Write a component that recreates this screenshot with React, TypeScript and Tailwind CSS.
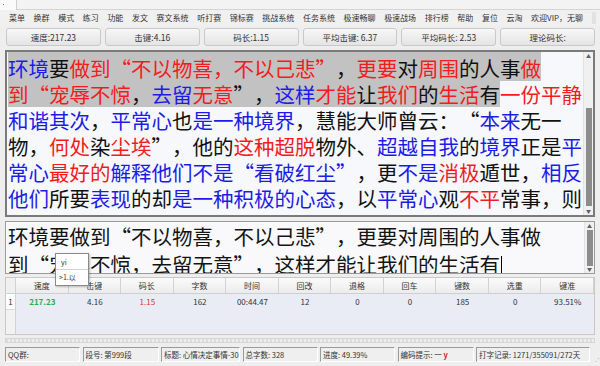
import React from "react";

type Seg = [string, "b" | "r" | "k"];

const color: Record<string, string> = {
  b: "text-[#1c1ce8]",
  r: "text-[#f21c1c]",
  k: "text-[#111111]",
};

const menu = [
  "菜单", "换群", "模式", "练习", "功能", "发文", "赛文系统", "听打赛", "锦标赛",
  "挑战系统", "任务系统", "极速畅聊", "极速战场", "排行榜", "帮助", "复位", "云淘", "欢迎VIP，无聊",
];

const stats = ["速度:217.23", "击键:4.16", "码长:1.15", "平均击键: 6.37", "平均码长: 2.53", "理论码长:"];

// each line: typed part (grey background) + rest
const lines: { typed: Seg[]; rest: Seg[] }[] = [
  {
    typed: [["环境", "b"], ["要", "k"], ["做到“不以物喜，不以己悲”", "r"], ["，", "k"], ["更要", "r"], ["对", "k"], ["周围", "r"], ["的人事", "k"], ["做", "r"]],
    rest: [],
  },
  {
    typed: [["到“", "r"], ["宠辱不惊", "r"], ["，", "k"], ["去留", "b"], ["无意", "r"], ["”，", "k"], ["这样", "b"], ["才能", "r"], ["让", "k"], ["我们", "r"], ["的", "k"], ["生活", "r"], ["有", "k"]],
    rest: [["一份平静", "r"]],
  },
  {
    typed: [],
    rest: [["和谐其次", "b"], ["，", "k"], ["平常心", "b"], ["也", "k"], ["是一种境界", "b"], ["，慧能大师曾云：“", "k"], ["本来", "b"], ["无一", "k"]],
  },
  {
    typed: [],
    rest: [["物，", "k"], ["何处", "r"], ["染", "k"], ["尘埃", "r"], ["”，他的", "k"], ["这种超脱", "r"], ["物外、", "k"], ["超越自我", "b"], ["的", "k"], ["境界", "b"], ["正是", "k"], ["平", "b"]],
  },
  {
    typed: [],
    rest: [["常心", "b"], ["最好的", "r"], ["解释他们不是“看破红尘”", "b"], ["，更", "k"], ["不是", "b"], ["消极", "r"], ["遁世，", "k"], ["相反", "b"]],
  },
  {
    typed: [],
    rest: [["他们", "b"], ["所要", "k"], ["表现", "b"], ["的却", "k"], ["是一种积极的心态", "b"], ["，以", "k"], ["平常心", "b"], ["观", "k"], ["不平", "r"], ["常事，则", "k"]],
  },
];

const headers = ["速度", "击键", "码长", "字数", "时间", "回改", "退格", "回车", "键数", "选重", "键准"];
const row = ["217.23", "4.16", "1.15", "162", "00:44.47", "12", "0", "0", "185", "0", "93.51%"];

const status: { label: React.ReactNode; w: string }[] = [
  { label: "QQ群:", w: "w-[75px]" },
  { label: "段号: 第999段", w: "w-[76px]" },
  { label: "标题: 心情决定事情-30", w: "w-[79px]" },
  { label: "总字数: 328", w: "w-[75px]" },
  { label: "进度: 49.39%", w: "w-[75px]" },
  {
    label: (
      <>
        编码提示: 一 <span className="text-[#e01010] font-bold">y</span>
      </>
    ),
    w: "w-[76px]",
  },
  { label: "打字记录: 1271/355091/272天", w: "w-[114px]" },
];

function Segs({ segs }: { segs: Seg[] }) {
  return (
    <>
      {segs.map(([t, c], i) => (
        <span key={i} className={color[c]}>
          {t}
        </span>
      ))}
    </>
  );
}

function ScrollBar({ thumbTop, thumbH }: { thumbTop: string; thumbH: string }) {
  return (
    <div className="w-[10px] shrink-0 flex flex-col items-center bg-[#f0f0f0] border-l border-[#e2e2e2]">
      <div className="text-[5px] leading-[8px] text-[#606060] h-[8px]">▲</div>
      <div className="flex-1 w-full relative">
        <div className={`absolute left-[2px] w-[6px] bg-[#8c8c8c] ${thumbTop} ${thumbH}`} />
      </div>
      <div className="text-[5px] leading-[8px] text-[#606060] h-[8px]">▼</div>
    </div>
  );
}

export default function App() {
  return (
    <div
      lang="zh-CN"
      className="w-[600px] h-[366px] overflow-hidden bg-[#eeeeee] flex flex-col text-[#222] [text-spacing-trim:space-all]"
      style={{ fontFamily: '"Noto Sans CJK SC", "Noto Sans", sans-serif' }}
    >
      {/* title strip */}
      <div className="h-[10px] shrink-0 flex bg-[#f3f3f3] border-b border-[#d4d4d4]">
        <div className="w-[17px] h-[10px] border-r border-[#cfcfcf] bg-[#fafafa] pl-[3px] pt-[4px]">
          <div className="w-[1px] h-[1px] bg-[#777]" />
        </div>
      </div>

      {/* menu bar */}
      <div className="h-[16px] shrink-0 flex items-center gap-[8.6px] pl-[9px] text-[8px] leading-[16px] text-[#333] bg-[#f0f0f0]">
        {menu.map((m) => (
          <span key={m} className="whitespace-nowrap">
            {m}
          </span>
        ))}
        <div className="ml-auto mr-[4px] w-[8px] h-[12px] bg-[#e2e2e2]" />
      </div>

      {/* stats buttons */}
      <div className="h-[20px] shrink-0 grid grid-cols-6 gap-[4px] pl-[6px] pr-[5px] pt-[2px]">
        {stats.map((s) => (
          <div
            key={s}
            className="h-[18px] rounded-[3px] border border-[#c9c9c9] bg-gradient-to-b from-[#f7f7f7] to-[#e4e4e4] flex items-center justify-center text-[8.5px] text-[#333] whitespace-nowrap"
          >
            {s}
          </div>
        ))}
      </div>

      {/* upper text box */}
      <div className="mt-[4px] mx-[5px] h-[167px] shrink-0 flex border-2 border-[#7a7a7a] bg-[#f7f8fc]">
        <div className="flex-1 pl-[1px] pt-[3px] text-[20.5px] leading-[26px] overflow-hidden">
          {lines.map((l, i) => (
            <div key={i} className="whitespace-nowrap h-[26px]">
              {l.typed.length > 0 && (
                <span className={`inline-block bg-[#c2c2c2] ${i === 0 ? "h-[26px] -mt-[3px] pt-[3px] box-content" : "h-[26px]"}`}>
                  <Segs segs={l.typed} />
                </span>
              )}
              <Segs segs={l.rest} />
            </div>
          ))}
        </div>
        <ScrollBar thumbTop="top-[48px]" thumbH="h-[98px]" />
      </div>

      {/* input box */}
      <div className="relative mt-[4px] mx-[5px] h-[53px] shrink-0 flex border border-[#9a9a9a] bg-[#f9f9fb]">
        <div className="flex-1 pl-[2px] text-[20.5px] leading-[28px] text-[#141414] overflow-hidden">
          <div className="whitespace-nowrap">环境要做到“不以物喜，不以己悲”，更要对周围的人事做</div>
          <div className="whitespace-nowrap">
            到“宠辱不惊，去留无意”，这样才能让我们的生活有
            <span className="inline-block w-[1px] h-[22px] bg-black align-middle ml-[1px]" />
          </div>
        </div>
        <ScrollBar thumbTop="top-[0px]" thumbH="h-[36px]" />
        {/* IME candidate popup */}
        <div className="absolute left-[49px] top-[31px] w-[34px] h-[33px] bg-white border border-[#8a8a8a] shadow-[1px_1px_2px_rgba(0,0,0,0.25)] z-10 text-[7px] text-[#333]">
          <div className="h-[16px] border-b border-[#d0d0d0] pl-[5px] leading-[16px]">yi</div>
          <div className="pl-[3px] leading-[15px]">&gt;1.以</div>
        </div>
      </div>

      {/* result table */}
      <div className="mt-[3px] mx-[5px] h-[58px] shrink-0 border border-[#c8c8c8] bg-[#e9ecf4] text-[8px] text-[#333]">
        <div className="grid grid-cols-[10px_repeat(11,1fr)] h-[16px] bg-gradient-to-b from-[#fbfbfb] to-[#ececec] border-b border-[#cfcfcf]">
          <div className="border-r border-[#d2d2d2] bg-[#f0f0f0]" />
          {headers.map((h) => (
            <div key={h} className="border-r border-[#d2d2d2] flex items-center justify-center">
              {h}
            </div>
          ))}
        </div>
        <div className="grid grid-cols-[10px_repeat(11,1fr)] h-[40px]">
          <div className="bg-[#f2f2f2] border-r border-[#d2d2d2] flex justify-center">
            <div className="h-[16px] w-full flex items-center justify-center bg-white border-b border-[#d8d8d8]">1</div>
          </div>
          {row.map((v, i) => (
            <div
              key={i}
              className={`h-[16px] flex items-center justify-center ${i === 0 ? "text-[#22b04a] font-semibold" : i === 2 ? "text-[#e03030]" : ""}`}
            >
              {v}
            </div>
          ))}
        </div>
      </div>

      {/* progress strip */}
      <div className="mt-[3px] mx-[5px] h-[5px] shrink-0 border border-[#d6d6d6] bg-[repeating-linear-gradient(90deg,#dcdcdc_0px,#dcdcdc_2px,#eeeeee_2px,#eeeeee_4px)]" />

      {/* status bar */}
      <div className="mt-[4px] pl-[5px] h-[15px] shrink-0 flex gap-[2.5px] items-stretch">
        {status.map((s, i) => (
          <div
            key={i}
            className={`${s.w} shrink-0 border border-t-[#9a9a9a] border-l-[#9a9a9a] border-b-[#ffffff] border-r-[#ffffff] bg-[#efefef] text-[7.5px] leading-[13px] pl-[2px] whitespace-nowrap overflow-hidden text-[#333]`}
          >
            {s.label}
          </div>
        ))}
        <div className="ml-[2px] self-end text-[7px] leading-[8px] text-[#aaa]">⋰</div>
      </div>
    </div>
  );
}
